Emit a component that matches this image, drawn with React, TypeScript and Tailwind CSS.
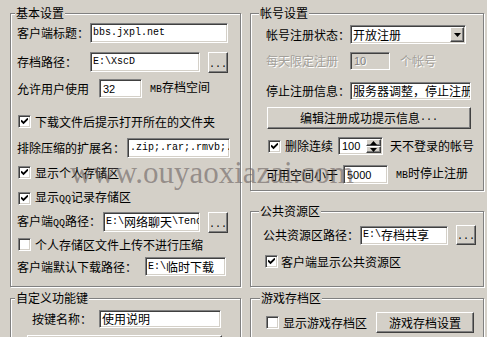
const cjk = "font-['Noto_Sans_CJK_SC',sans-serif]";

// SimSun draws ASCII at half width; split runs so latin gets a narrow mono face
function Mix({ s }: { s: string }) {
  const parts = s.match(/[\x00-\x7f]+|[^\x00-\x7f]+/g) ?? [];
  return (
    <>
      {parts.map((p, i) =>
        /^[\x00-\x7f]/.test(p) ? (
          <span key={i} className="font-['Liberation_Mono',monospace] text-[10px]">
            {p}
          </span>
        ) : (
          <span key={i}>{p}</span>
        )
      )}
    </>
  );
}

function Group({
  title,
  titleLeft,
  className,
  children,
}: {
  title: string;
  titleLeft: string;
  className: string;
  children: React.ReactNode;
}) {
  return (
    <div className={`relative border border-[#808080] shadow-[inset_1px_1px_0_#fff,1px_1px_0_#fff] ${className}`}>
      <span className={`absolute -top-[8px] ${titleLeft} bg-[#d4d0c8] px-[1px] leading-[14px]`}>{title}</span>
      {children}
    </div>
  );
}

const sunken =
  "border border-[#808080] border-r-white border-b-white shadow-[inset_1px_1px_0_#404040,inset_-1px_-1px_0_#d4d0c8]";
const raised =
  "border border-white border-r-[#404040] border-b-[#404040] shadow-[inset_-1px_-1px_0_#808080]";

function Input({ size, value, dim }: { size: string; value: string; dim?: boolean }) {
  return (
    <div
      className={`${sunken} ${size} ${dim ? "bg-[#d4d0c8] text-[#808080]" : "bg-white"} flex shrink-0 items-center overflow-hidden whitespace-nowrap pl-[2px] leading-[14px]`}
    >
      <Mix s={value} />
    </div>
  );
}

function NumInput({ size, value, dim }: { size: string; value: string; dim?: boolean }) {
  return (
    <div
      className={`${sunken} ${size} ${dim ? "bg-[#d4d0c8] text-[#808080]" : "bg-white"} flex shrink-0 items-center pl-[3px] font-['Liberation_Sans',sans-serif] text-[11px]`}
    >
      {value}
    </div>
  );
}

function Dots({ size }: { size: string }) {
  return (
    <div className={`${raised} ${size} flex shrink-0 items-end justify-center bg-[#d4d0c8] pb-[3px]`}>
      <span className="font-['Liberation_Mono',monospace] text-[10px] leading-[8px]">...</span>
    </div>
  );
}

function Check({ on }: { on: boolean }) {
  return (
    <div className={`${sunken} flex h-[13px] w-[13px] shrink-0 items-center justify-center bg-white`}>
      {on && (
        <svg width="7" height="7" viewBox="0 0 7 7">
          <path d="M0 2.5 L2.5 5 L7 0.5" stroke="#000" strokeWidth="1.8" fill="none" />
        </svg>
      )}
    </div>
  );
}

function Tri({ up }: { up?: boolean }) {
  return (
    <svg width="7" height="4" viewBox="0 0 7 4">
      <path d={up ? "M0 4 L3.5 0 L7 4 Z" : "M0 0 L7 0 L3.5 4 Z"} fill="#000" />
    </svg>
  );
}

export default function App() {
  return (
    <div className={`relative h-[337px] w-[487px] overflow-hidden bg-[#d4d0c8] text-[12px] leading-[14px] text-black ${cjk}`}>
      <div className="flex gap-[9px] pl-[10px] pt-[13px]">
        {/* left column */}
        <div className="flex w-[231px] shrink-0 flex-col">
          <Group title="基本设置" titleLeft="left-[4px]" className="h-[274px]">
            <div className="flex flex-col pl-[6px]">
              <div className="mt-[9px] flex h-[20px] items-center">
                <span className="w-[73px] shrink-0">客户端标题：</span>
                <Input size="w-[138px] h-[20px]" value="bbs.jxpl.net" />
              </div>
              <div className="mt-[9px] flex h-[20px] items-center">
                <span className="w-[73px] shrink-0">存档路径：</span>
                <Input size="w-[110px] h-[20px]" value="E:\XscD" />
                <Dots size="ml-[8px] w-[20px] h-[21px]" />
              </div>
              <div className="mt-[7px] flex h-[19px] items-center">
                <span className="w-[82px] shrink-0">允许用户使用</span>
                <NumInput size="w-[43px] h-[19px]" value="32" />
                <span className="ml-[8px]">
                  <Mix s="MB存档空间" />
                </span>
              </div>
              <div className="mt-[17px] flex h-[13px] items-center pl-[1px]">
                <Check on />
                <span className="ml-[4px]">下载文件后提示打开所在的文件夹</span>
              </div>
              <div className="mt-[10px] flex h-[20px] items-center">
                <span className="w-[110px] shrink-0">排除压缩的扩展名：</span>
                <Input size="w-[103px] h-[20px]" value=".zip;.rar;.rmvb;.avi" />
              </div>
              <div className="mt-[8px] flex h-[13px] items-center pl-[1px]">
                <Check on />
                <span className="ml-[4px]">显示个人存储区</span>
              </div>
              <div className="mt-[13px] flex h-[13px] items-center pl-[1px]">
                <Check on />
                <span className="ml-[4px]">
                  <Mix s="显示QQ记录存储区" />
                </span>
              </div>
              <div className="mt-[7px] flex h-[20px] items-center">
                <span className="w-[86px] shrink-0">
                  <Mix s="客户端QQ路径：" />
                </span>
                <Input size="w-[97px] h-[20px]" value="E:\网络聊天\Tencent" />
                <Dots size="ml-[8px] w-[20px] h-[21px]" />
              </div>
              <div className="mt-[6px] flex h-[13px] items-center pl-[1px]">
                <Check on={false} />
                <span className="ml-[4px]">个人存储区文件上传不进行压缩</span>
              </div>
              <div className="mt-[6px] flex h-[19px] items-center">
                <span className="w-[128px] shrink-0">客户端默认下载路径：</span>
                <Input size="w-[81px] h-[19px]" value="E:\临时下载" />
              </div>
            </div>
          </Group>

          <Group title="自定义功能键" titleLeft="left-[4px]" className="mt-[11px] h-[60px]">
            <div className="flex flex-col">
              <div className="mt-[11px] flex h-[18px] items-center pl-[21px]">
                <span className="w-[67px] shrink-0">按键名称：</span>
                <Input size="w-[122px] h-[18px]" value="使用说明" />
              </div>
              <div className={`${raised} ml-[16px] mt-[7px] h-[20px] w-[195px] bg-[#d4d0c8]`} />
            </div>
          </Group>
        </div>

        {/* right column */}
        <div className="flex w-[234px] shrink-0 flex-col">
          <Group title="帐号设置" titleLeft="left-[8px]" className="h-[178px]">
            <div className="flex flex-col pl-[15px]">
              <div className="mt-[11px] flex h-[19px] items-center">
                <span className="w-[84px] shrink-0">帐号注册状态：</span>
                <div className={`${sunken} flex h-[19px] w-[116px] shrink-0 items-center justify-between bg-white pl-[2px] pr-[1px]`}>
                  <span>开放注册</span>
                  <div className={`${raised} flex h-[15px] w-[14px] items-center justify-center bg-[#d4d0c8]`}>
                    <Tri />
                  </div>
                </div>
              </div>
              <div className="mt-[8px] flex h-[18px] items-center text-[#a3a09a] [text-shadow:1px_1px_0_#fff]">
                <span className="w-[84px] shrink-0">每天限定注册</span>
                <NumInput size="w-[40px] h-[18px]" value="10" dim />
                <span className="ml-[10px]">个帐号</span>
              </div>
              <div className="mt-[12px] flex h-[18px] items-center">
                <span className="w-[84px] shrink-0">停止注册信息：</span>
                <Input size="w-[121px] h-[18px]" value="服务器调整，停止注册" />
              </div>
              <div className={`${raised} ml-[1px] mt-[7px] flex h-[22px] w-[204px] items-center justify-center bg-[#d4d0c8]`}>
                <Mix s="编辑注册成功提示信息..." />
              </div>
              <div className="mt-[8px] flex h-[18px] items-center">
                <div className="ml-[2px]">
                  <Check on />
                </div>
                <span className="ml-[4px] w-[53px] shrink-0">删除连续</span>
                <div className={`${sunken} flex h-[18px] w-[45px] shrink-0 items-center justify-between bg-white pl-[3px] pr-[1px] font-['Liberation_Sans',sans-serif] text-[11px]`}>
                  <span>100</span>
                  <div className="flex flex-col">
                    <div className={`${raised} flex h-[7px] w-[15px] items-center justify-center bg-[#d4d0c8]`}>
                      <Tri up />
                    </div>
                    <div className={`${raised} flex h-[7px] w-[15px] items-center justify-center bg-[#d4d0c8]`}>
                      <Tri />
                    </div>
                  </div>
                </div>
                <span className="ml-[7px]">天不登录的帐号</span>
              </div>
              <div className="mt-[10px] flex h-[19px] items-center">
                <span className="w-[77px] shrink-0">可用空间小于</span>
                <NumInput size="w-[45px] h-[19px]" value="5000" />
                <span className="ml-[8px]">
                  <Mix s="MB时停止注册" />
                </span>
              </div>
            </div>
          </Group>

          <Group title="公共资源区" titleLeft="left-[8px]" className="mt-[20px] h-[76px]">
            <div className="flex flex-col pl-[12px]">
              <div className="mt-[13px] flex h-[20px] items-center">
                <span className="w-[97px] shrink-0">公共资源区路径：</span>
                <Input size="w-[88px] h-[19px]" value="E:\存档共享" />
                <Dots size="ml-[8px] w-[20px] h-[20px]" />
              </div>
              <div className="mt-[10px] flex h-[13px] items-center pl-[2px]">
                <Check on />
                <span className="ml-[3px]">客户端显示公共资源区</span>
              </div>
            </div>
          </Group>

          <Group title="游戏存档区" titleLeft="left-[9px]" className="mt-[11px] h-[60px]">
            <div className="flex flex-col pl-[15px]">
              <div className="mt-[13px] flex h-[21px] items-center">
                <Check on={false} />
                <span className="ml-[4px] w-[93px] shrink-0">显示游戏存档区</span>
                <div className={`${raised} flex h-[21px] w-[98px] items-center justify-center bg-[#d4d0c8]`}>游戏存档设置</div>
              </div>
            </div>
          </Group>
        </div>
      </div>

      {/* site watermark stamped over the screenshot */}
      <span className="pointer-events-none absolute left-[70px] top-[157px] whitespace-nowrap font-['Liberation_Serif',serif] text-[31px] leading-none text-[rgba(95,85,85,0.55)]">
        www.ouyaoxiazai.com
      </span>
    </div>
  );
}
